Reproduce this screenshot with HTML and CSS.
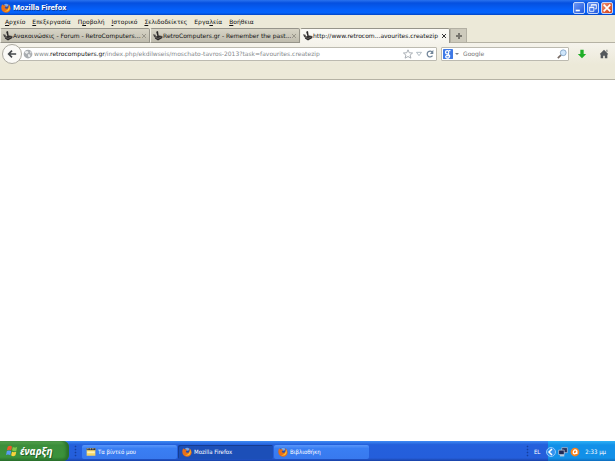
FILE: index.html
```
<!DOCTYPE html>
<html lang="el">
<head>
    <meta charset="utf-8">
    <meta name="viewport" content="width=device-width, initial-scale=1">
    <title>Mozilla Firefox</title>
    <link rel="stylesheet" href="styles.css">
</head>
<body>

<svg class="sprite" aria-hidden="true">
    <symbol id="firefox" viewBox="0 0 16 16">
        <circle cx="8" cy="8" r="7" fill="#2b4fa8"/>
        <path d="M5 2 Q9 0 12 3 Q11 6 8 6 Q6 5 5 2" fill="#79a9e8"/>
        <path d="M1 4 L3 2 L4 4 Q7 3 8 5 L6 7 Q7 10 10 9 Q13 8 12 5 L12 2 Q16 5 15.500 9 Q14 15 8 15.500 Q1 15 .5 8 Q.5 6 1 4Z" fill="#e8701a"/>
        <path d="M13 4 Q15 8 13 11 Q10 15 5 13 Q12 13 13 4Z" fill="#fbc02f"/>
    </symbol>
    <symbol id="joystick" viewBox="0 0 16 16">
        <path d="M5 1 L8 0 L9 7 L15 8 L15 11 L8 15 L3 12 L4 9 L7 8Z" fill="#2c2a2a"/>
        <path d="M0 5 L4 6 L5 10 L2 10Z" fill="#4a4745"/>
        <path d="M4 10 L8 12 L14 9" fill="none" stroke="#85807c"/>
    </symbol>
</svg>

<header class="titlebar">
    <svg class="icon"><use href="#firefox"/></svg>
    <h1>Mozilla Firefox</h1>
    <div class="window-buttons">
        <button aria-label="Ελαχιστοποίηση"><svg viewBox="0 0 12 12"><path d="M2 9h5" stroke="#fff" stroke-width="2"/></svg></button>
        <button aria-label="Επαναφορά"><svg viewBox="0 0 12 12"><path d="M4 4V2h6v5H8M2 5h5v5H2z M4 2.500h6M2 5.500h5" fill="none" stroke="#fff"/></svg></button>
        <button class="close" aria-label="Κλείσιμο"><svg viewBox="0 0 12 12"><path d="M2 2l8 8M10 2l-8 8" stroke="#fff" stroke-width="2"/></svg></button>
    </div>
</header>

<nav class="menubar">
    <button><u>Α</u>ρχείο</button>
    <button><u>Ε</u>πεξεργασία</button>
    <button>Π<u>ρ</u>οβολή</button>
    <button><u>Ι</u>στορικό</button>
    <button><u>Σ</u>ελιδοδείκτες</button>
    <button>Εργα<u>λ</u>εία</button>
    <button><u>Β</u>οήθεια</button>
</nav>

<div class="tabs">
    <div class="tab">
        <svg class="icon"><use href="#joystick"/></svg>
        <button class="tab-title">Ανακοινώσεις - Forum - RetroComputers....</button>
        <button class="tab-close" aria-label="Κλείσιμο καρτέλας"><svg viewBox="0 0 6 6"><path d="M1 1l4 4M5 1l-4 4"/></svg></button>
    </div>
    <div class="tab">
        <svg class="icon"><use href="#joystick"/></svg>
        <button class="tab-title">RetroComputers.gr - Remember the past...</button>
        <button class="tab-close" aria-label="Κλείσιμο καρτέλας"><svg viewBox="0 0 6 6"><path d="M1 1l4 4M5 1l-4 4"/></svg></button>
    </div>
    <div class="tab active">
        <svg class="icon"><use href="#joystick"/></svg>
        <button class="tab-title">http://www.retrocom...avourites.createzip</button>
        <button class="tab-close" aria-label="Κλείσιμο καρτέλας"><svg viewBox="0 0 6 6"><path d="M1 1l4 4M5 1l-4 4"/></svg></button>
    </div>
    <button class="new-tab" aria-label="Νέα καρτέλα"><svg viewBox="0 0 8 8"><path d="M4 1v6M1 4h6" stroke="#77756d" stroke-width="2"/></svg></button>
</div>

<div class="toolbar">
    <button class="back" aria-label="Πίσω"><svg viewBox="0 0 12 12"><path d="M11 6H2M6 2L2 6l4 4" fill="none" stroke="#45484b" stroke-width="2"/></svg></button>
    <div class="field address">
        <svg class="icon" viewBox="0 0 16 16"><circle cx="8" cy="8" r="7" fill="#a9adb1"/><path d="M3 4l4-1 2 2-3 3-3-2zM8 8l4 1-1 4-3-1zM11 3l3 3-2 1z" fill="#e9ebec"/></svg>
        <a class="url" href="#">www.<b>retrocomputers.gr</b>/index.php/ekdilwseis/moschato-tavros-2013?task=favourites.createzip</a>
        <button aria-label="Σελιδοδείκτης"><svg viewBox="0 0 12 12"><path d="M6 1l1.500 3.500 4 .3-3 2.500 1 3.700L6 9l-3.500 2 1-3.700-3-2.500 4-.3z" fill="#fff" stroke="#9aa1a8"/></svg></button>
        <button aria-label="Ιστορικό διευθύνσεων"><svg viewBox="0 0 12 12"><path d="M3 4h6L6 8z" fill="#fff" stroke="#a5b1bb"/></svg></button>
        <button aria-label="Ανανέωση"><svg viewBox="0 0 12 12"><path d="M9 8a3.500 3.500 0 1 1 0-4" fill="none" stroke="#71859a" stroke-width="1.500"/><path d="M10 1v5H6z" fill="#71859a"/></svg></button>
    </div>
    <div class="field search">
        <button aria-label="Μηχανή αναζήτησης"><svg viewBox="0 0 12 12"><rect width="12" height="12" rx="1" fill="#3f79e6"/><circle cx="5" cy="4" r="2" fill="none" stroke="#fff" stroke-width="1.500"/><path d="M7 2h2M6 6l2 2q0 3-3 3-3-1-1-3h3" fill="none" stroke="#fff" stroke-width="1.500"/></svg></button>
        <svg class="caret" viewBox="0 0 4 4"><path d="M0 1h4L2 3z" fill="#7a8087"/></svg>
        <input type="text" placeholder="Google" aria-label="Αναζήτηση">
        <button aria-label="Αναζήτηση"><svg viewBox="0 0 12 12"><path d="M1 11l4-4" stroke="#786b65" stroke-width="2"/><circle cx="7.500" cy="4.500" r="3.500" fill="#cfe6fb" stroke="#7ea0c2"/></svg></button>
    </div>
    <button class="tool" aria-label="Λήψεις"><svg viewBox="0 0 12 12"><path d="M4 1h4v5h3l-5 5-5-5h3z" fill="#1fae26"/></svg></button>
    <button class="tool" aria-label="Αρχική σελίδα"><svg viewBox="0 0 12 12"><path d="M6 1l5 5-1 1v4H7V8H5v3H2V7L1 6zM9 1h1v3L9 3z" fill="#54585c"/></svg></button>
</div>

<main class="page"></main>

<footer class="taskbar">
    <button class="start">
        <svg viewBox="0 0 14 14"><path d="M2 2q3-2 5 0L6 6Q4 5 1 6z" fill="#ed5a2b"/><path d="M8 2q2 2 5 0l-1 5q-3 1-5-1z" fill="#82c94b"/><path d="M1 7q2-1 5 0l-1 5q-3-2-5 0z" fill="#5a9af3"/><path d="M7 8q2 1 5 0l-1 4q-3 2-5 0z" fill="#fbd33c"/></svg>
        έναρξη
    </button>
    <div class="grip"></div>
    <div class="tasks">
        <button><svg class="icon" viewBox="0 0 16 16"><path d="M1 2h14v12H1z" fill="#f5d564"/><path d="M1 2h14v3H1z" fill="#343434"/><path d="M2 3h2M6 3h2M10 3h2" stroke="#fff"/><path d="M2 7h12v3H2z" fill="#fff3b5"/></svg>Τα βίντεό μου</button>
        <button class="current"><svg class="icon"><use href="#firefox"/></svg>Mozilla Firefox</button>
        <button><svg class="icon"><use href="#firefox"/></svg>Βιβλιοθήκη</button>
    </div>
    <div class="grip"></div>
    <button class="language">EL</button>
    <div class="tray">
        <button class="expand" aria-label="Εμφάνιση εικονιδίων"><svg viewBox="0 0 10 10"><circle cx="5" cy="5" r="4.500" fill="#3391ee" stroke="#8cc8fb"/><path d="M6 2L3 5l3 3" fill="none" stroke="#fff" stroke-width="1.500"/></svg></button>
        <svg class="icon" viewBox="0 0 16 16"><path d="M6 1h9v8H6z" fill="#27345e" stroke="#c5cfe2"/><path d="M1 5h9v7H1z" fill="#1c2855" stroke="#d5dbea"/><path d="M3 14h7" stroke="#ccd3e0" stroke-width="2"/></svg>
        <svg class="icon" viewBox="0 0 16 16"><circle cx="8" cy="8" r="7" fill="#f58220"/><path d="M11 6q-3-3-5 0-2 4 1 5 3 0 4-5v5" fill="none" stroke="#fff" stroke-width="2"/></svg>
        <time>2:33 μμ</time>
    </div>
</footer>

</body>
</html>
```

FILE: styles.css
```
* {
    box-sizing: border-box;
}

body {
    display: flex;
    flex-direction: column;
    min-height: 100vh;
    margin: 0;
    background: #fff;
    color: #111;
    font-family: "DejaVu Sans", Tahoma, sans-serif;
    font-size: 6px;
    line-height: 10px;
}

button,
input {
    margin: 0;
    padding: 0;
    border: 0;
    background: none;
    color: inherit;
    font: inherit;
}

svg {
    display: block;
    flex: none;
    width: 10px;
    height: 10px;
}

.sprite {
    position: absolute;
    width: 0;
    height: 0;
}

.titlebar {
    display: flex;
    align-items: center;
    gap: 2px;
    height: 15px;
    padding: 0 2px 0 1px;
    background: linear-gradient(#2a72ee, #0550df 20%, #0560fa 65%, #0464fb 85%, #0244c4);
    color: #fff;
}

.titlebar h1 {
    flex: 1;
    margin: 0;
    font-family: Roboto, "Trebuchet MS", sans-serif;
    font-size: 8px;
    text-shadow: 1px 1px #0a3a9e;
}

.window-buttons {
    display: flex;
    gap: 2px;
}

.window-buttons button {
    display: flex;
    align-items: center;
    justify-content: center;
    width: 12px;
    height: 12px;
    border: 1px solid #c5d6f8;
    border-radius: 2px;
    background: linear-gradient(135deg, #6c97f5, #2059de);
}

.window-buttons .close {
    background: linear-gradient(135deg, #ee8f72, #d23c12);
}

.menubar {
    display: flex;
    gap: 7px;
    height: 13px;
    padding: 1px 5px 0;
    background: #ece9d8;
}

.menubar u {
    text-underline-offset: 1px;
}

.tabs {
    display: flex;
    height: 15px;
    background: #ece9d8;
    box-shadow: inset 0 -1px #b5b2a4;
}

.tab {
    display: flex;
    flex: 0 1 150px;
    align-items: center;
    min-width: 0;
    padding: 0 2px;
    border: 1px solid #96948a;
    border-left-color: #f3f1e7;
    border-radius: 2px 2px 0 0;
    background: linear-gradient(#d7d4c6, #bfbcae);
}

.tab.active {
    border-bottom: 0;
    background: linear-gradient(#fbfaf6, #f5f3ec);
}

.tab-title {
    flex: 1;
    min-width: 0;
    overflow: hidden;
    text-align: left;
    white-space: nowrap;
}

.tab-close svg {
    width: 6px;
    height: 6px;
    stroke: #99968b;
}

.active .tab-close svg {
    stroke: #333;
}

.new-tab {
    display: flex;
    align-items: center;
    justify-content: center;
    width: 17px;
    border: 1px solid #b3b0a3;
    background: #cdcabc;
}

.new-tab svg {
    width: 8px;
    height: 8px;
}

.toolbar {
    display: flex;
    align-items: flex-start;
    gap: 4px;
    height: 37px;
    padding: 4px 2px 0;
    border-bottom: 1px solid #b5b2a4;
    background: linear-gradient(#f5f3ec, #ece9d8 60%);
}

.back {
    display: flex;
    align-items: center;
    justify-content: center;
    width: 20px;
    height: 20px;
    margin: -3px -8px 0 0;
    border: 1px solid #aaa89f;
    border-radius: 50%;
    background: #fbfaf7;
    z-index: 1;
}

.field {
    display: flex;
    align-items: center;
    height: 14px;
    border: 1px solid #bcbab0;
    border-radius: 1px;
    background: #fff;
}

.address {
    flex: 1;
    gap: 1px;
    min-width: 0;
    padding: 0 1px 0 4px;
}

.url {
    flex: 1;
    min-width: 0;
    overflow: hidden;
    color: #85888b;
    text-decoration: none;
    white-space: nowrap;
}

.url b {
    color: #111;
    font-weight: 500;
}

.search {
    flex: 0 1 128px;
    gap: 2px;
    min-width: 0;
    padding: 0 1px;
}

.search .caret {
    width: 4px;
    height: 4px;
}

.search input {
    flex: 1;
    width: 0;
    min-width: 0;
    padding-left: 2px;
    outline: 0;
}

.search input::placeholder {
    color: #777;
    opacity: 1;
}

.tool {
    padding: 2px 4px;
}

.page {
    flex: 1;
}

.taskbar {
    display: flex;
    align-items: stretch;
    height: 20px;
    background: linear-gradient(#3f8cf3, #2460dc 18%, #245edb 85%, #1941a5);
    color: #fff;
    font-family: "DejaVu Sans Condensed", "DejaVu Sans", Tahoma, sans-serif;
}

.start {
    display: flex;
    align-items: center;
    gap: 2px;
    width: 69px;
    padding-left: 6px;
    border-radius: 0 6px 6px 0;
    background: linear-gradient(#5eac56, #3c8e3a 20%, #3b923b 80%, #2a6f2b);
    box-shadow: inset -3px 0 3px #2a702b;
    font-family: "Noto Sans", "Trebuchet MS", sans-serif;
    font-size: 10px;
    font-style: italic;
    font-weight: bold;
    text-shadow: 1px 1px #27602a;
}

.start svg {
    width: 12px;
    height: 12px;
}

.grip {
    width: 3px;
    margin: 4px 5px;
    background: radial-gradient(circle, #143f9f 40%, transparent 50%) 0 0 / 3px 3px;
}

.tasks {
    display: flex;
    flex: 1;
    gap: 1px;
    padding: 4px 0 2px;
}

.tasks button {
    display: flex;
    flex: 0 1 95px;
    align-items: center;
    gap: 2px;
    padding-left: 4px;
    border-radius: 2px;
    background: linear-gradient(#5896fa, #3a7ff3 25%, #3879ee);
    white-space: nowrap;
}

.tasks .current {
    background: #1c4fb8;
    box-shadow: inset 1px 1px #153d91;
}

.language {
    padding: 2px 8px 0 0;
}

.tray {
    display: flex;
    align-items: center;
    gap: 2px;
    padding: 2px 9px 0 0;
    background: linear-gradient(#2eb1f5, #1290e8 20%, #1290e8 85%, #0d6cbc);
}

.tray .expand {
    margin-left: -2px;
}

.tray time {
    padding-left: 3px;
}
```
